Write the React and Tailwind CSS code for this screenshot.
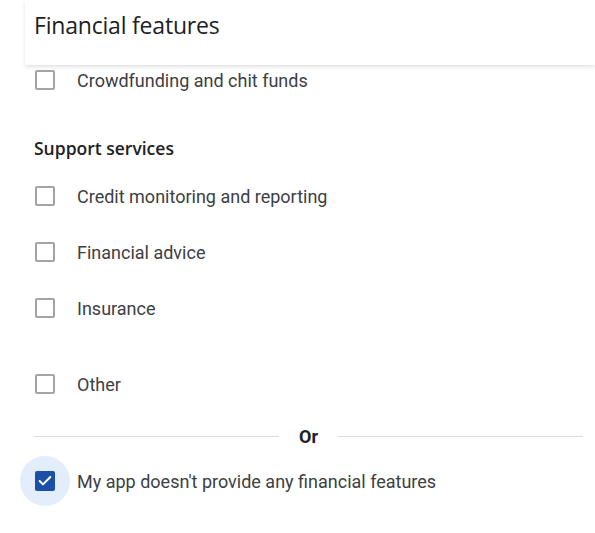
import { Check } from "lucide-react";

const ROW_TEXT = "text-[18px] text-[#3c4043] font-['Roboto',sans-serif]";

function Box({ checked }) {
  if (checked) {
    return (
      <div className="relative w-[20px] h-[20px] shrink-0">
        <div className="absolute -left-[15px] -top-[15px] w-[50px] h-[50px] rounded-full bg-[#e3edfc]" />
        <div className="relative w-[20px] h-[20px] rounded-[2px] bg-[#1b4fa8] flex items-center justify-center">
          <Check className="w-[16px] h-[16px] text-white" strokeWidth={3} />
        </div>
      </div>
    );
  }
  return <div className="w-[20px] h-[20px] shrink-0 rounded-[2px] border-2 border-[#a4a4a4] bg-white" />;
}

function Row({ label, checked, className = "" }) {
  return (
    <div className={"flex items-center gap-[22px] pl-[35px] " + className}>
      <Box checked={checked} />
      <span className={ROW_TEXT}>{label}</span>
    </div>
  );
}

export default function App() {
  return (
    <div className="w-[595px] h-[533px] bg-white overflow-hidden">
      {/* header */}
      <div className="h-[65px] ml-[25px] pl-[9px] flex items-start pt-[11px] bg-white shadow-[0_2px_4px_rgba(0,0,0,0.12)] relative z-10">
        <h1 className="text-[23px] leading-[28px] text-[#202124] font-['Open_Sans',sans-serif] tracking-[-0.2px]">
          Financial features
        </h1>
      </div>

      <Row label="Crowdfunding and chit funds" className="h-[30px]" />

      <div className="mt-[41px] pl-[34px] h-[24px] flex items-center text-[17.5px] font-semibold text-[#202124] font-['Open_Sans',sans-serif]">
        Support services
      </div>

      <Row label="Credit monitoring and reporting" className="h-[30px] mt-[21px]" />
      <Row label="Financial advice" className="h-[30px] mt-[26px]" />
      <Row label="Insurance" className="h-[30px] mt-[26px]" />
      <Row label="Other" className="h-[30px] mt-[46px]" />

      {/* divider */}
      <div className="mt-[25px] h-[24px] flex items-center gap-[20px] pl-[34px] pr-[12px]">
        <div className="flex-1 h-px bg-[#dadce0]" />
        <span className="text-[18px] font-bold text-[#202124] font-['Roboto',sans-serif]">Or</span>
        <div className="flex-1 h-px bg-[#dadce0]" />
      </div>

      <Row label="My app doesn't provide any financial features" checked className="h-[50px] mt-[8px]" />
    </div>
  );
}
